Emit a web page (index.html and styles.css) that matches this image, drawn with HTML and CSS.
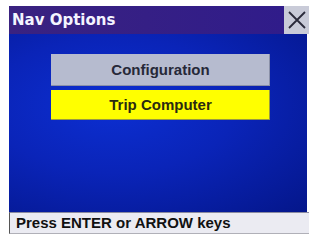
FILE: index.html
```html
<!DOCTYPE html>
<html lang="en">
<head>
    <meta charset="UTF-8">
    <meta name="viewport" content="width=device-width, initial-scale=1.0">
    <title>Nav Options</title>
    <link rel="stylesheet" href="styles.css">
</head>
<body>
    <div class="screen">

        <!-- Title bar -->
        <div class="titleRow">
            <div class="titleBar">Nav Options</div>
            <div class="closeBtn">
                <svg width="25" height="29" viewBox="0 0 25 29">
                    <path d="M5 6 L21 22 M21 6 L5 22" stroke="#2a2a3a" stroke-width="1.8" fill="none"/>
                </svg>
            </div>
        </div>

        <!-- Menu -->
        <div class="menuArea">
            <div class="menuButton">Configuration</div>
            <div class="menuButton selected">Trip Computer</div>
        </div>

        <!-- Status -->
        <div class="statusBar">Press ENTER or ARROW keys</div>
    </div>
</body>
</html>
```

FILE: styles.css
```css
body {
    margin: 0;
    background-color: #fff;
    font-family: "Liberation Sans", Arial, sans-serif;
}
.screen {
    margin: 6px 0 0 9px;
    width: 300px;
}
.titleRow {
    display: flex;
    height: 28px;
}
.titleBar {
    flex: 1;
    background: linear-gradient(90deg, #3a2280, #301c8a);
    color: #f4f4ff;
    font-family: "DejaVu Sans", sans-serif;
    font-weight: bold;
    font-size: 15px;
    line-height: 28px;
    padding-left: 3px;
}
.closeBtn {
    width: 25px;
    background-color: #c9cbd8;
}
.menuArea {
    height: 158px;
    width: 298px;
    padding-top: 20px;
    background: radial-gradient(ellipse at 35% 40%, #0c2fd2 0%, #0a24b8 45%, #04168a 100%);
}
.menuButton {
    margin-left: 42px;
    width: 219px;
    height: 32px;
    line-height: 32px;
    text-align: center;
    background-color: #b6bbcf;
    color: #262838;
    font-weight: bold;
    font-size: 15px;
    box-shadow: inset -1px -1px 0 #8a90a8;
}
.menuButton + .menuButton {
    margin-top: 4px;
}
.selected {
    background-color: #ffff00;
    color: #2a2a10;
    height: 30px;
    line-height: 30px;
    box-shadow: inset -1px -1px 0 #9a9a40;
}
.statusBar {
    height: 20px;
    line-height: 20px;
    border-top: 1px solid #8a8aa0;
    border-left: 1px solid #555;
    border-bottom: 1px solid #b0b0b8;
    background-color: #ebebf2;
    color: #111;
    font-weight: bold;
    font-size: 15px;
    padding-left: 6px;
}
```
